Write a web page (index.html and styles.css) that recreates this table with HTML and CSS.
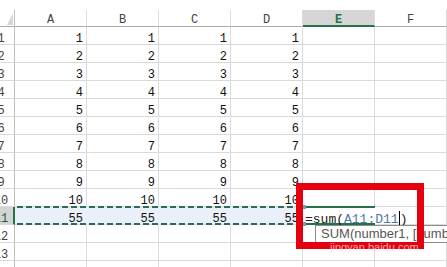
FILE: index.html
```html
<!DOCTYPE html>
<html>
<head>
<meta charset="utf-8">
<link rel="stylesheet" href="styles.css">
</head>
<body>
<div class="sheet">
  <div class="corner"><svg width="15" height="17" viewBox="0 0 15 17"><polygon points="7,15 13,15 13,3" fill="#d6d6d6"/></svg></div>
  <div class="ch">A</div><div class="ch">B</div><div class="ch">C</div><div class="ch">D</div><div class="ch active">E</div><div class="ch">F</div>

  <div class="rh"><span class="rn">1</span></div><div class="cell">1</div><div class="cell">1</div><div class="cell">1</div><div class="cell">1</div><div class="cell"></div><div class="cell"></div>
  <div class="rh"><span class="rn">2</span></div><div class="cell">2</div><div class="cell">2</div><div class="cell">2</div><div class="cell">2</div><div class="cell"></div><div class="cell"></div>
  <div class="rh"><span class="rn">3</span></div><div class="cell">3</div><div class="cell">3</div><div class="cell">3</div><div class="cell">3</div><div class="cell"></div><div class="cell"></div>
  <div class="rh"><span class="rn">4</span></div><div class="cell">4</div><div class="cell">4</div><div class="cell">4</div><div class="cell">4</div><div class="cell"></div><div class="cell"></div>
  <div class="rh"><span class="rn">5</span></div><div class="cell">5</div><div class="cell">5</div><div class="cell">5</div><div class="cell">5</div><div class="cell"></div><div class="cell"></div>
  <div class="rh"><span class="rn">6</span></div><div class="cell">6</div><div class="cell">6</div><div class="cell">6</div><div class="cell">6</div><div class="cell"></div><div class="cell"></div>
  <div class="rh"><span class="rn">7</span></div><div class="cell">7</div><div class="cell">7</div><div class="cell">7</div><div class="cell">7</div><div class="cell"></div><div class="cell"></div>
  <div class="rh"><span class="rn">8</span></div><div class="cell">8</div><div class="cell">8</div><div class="cell">8</div><div class="cell">8</div><div class="cell"></div><div class="cell"></div>
  <div class="rh"><span class="rn">9</span></div><div class="cell">9</div><div class="cell">9</div><div class="cell">9</div><div class="cell">9</div><div class="cell"></div><div class="cell"></div>
  <div class="rh"><span class="rn">10</span></div><div class="cell">10</div><div class="cell">10</div><div class="cell">10</div><div class="cell">10</div><div class="cell"></div><div class="cell"></div>
  <div class="rh active"><span class="rn">11</span></div><div class="cell sel">55</div><div class="cell sel">55</div><div class="cell sel">55</div><div class="cell sel">55</div><div class="cell editing">=sum(<span class="ref">A11:D11</span><span class="caret"></span>)</div><div class="cell after-edit"></div>
  <div class="rh"><span class="rn">12</span></div><div class="cell"></div><div class="cell"></div><div class="cell"></div><div class="cell"></div><div class="cell"></div><div class="cell"></div>
  <div class="rh"><span class="rn">13</span></div><div class="cell"></div><div class="cell"></div><div class="cell"></div><div class="cell"></div><div class="cell"></div><div class="cell"></div>
  <div class="rh"><span class="rn">14</span></div><div class="cell"></div><div class="cell"></div><div class="cell"></div><div class="cell"></div><div class="cell"></div><div class="cell"></div>
</div>

<div class="marquee"></div>
<div class="handle h-top"></div>
<div class="handle h-bottom"></div>
<div class="tooltip">SUM(number1, [number2], ...)</div>
<div class="redbox"></div>
<div class="watermark">jingyan.baidu.com</div>
</body>
</html>
```
FILE: styles.css
```css
html, body {
  margin: 0;
  padding: 0;
  background: #ffffff;
}
body {
  width: 447px;
  height: 267px;
  overflow: hidden;
  position: relative;
}
.sheet {
  margin-top: 10px;
  display: grid;
  grid-template-columns: 15px repeat(6, 72px);
  grid-template-rows: 17px;
  grid-auto-rows: 18px;
  font-family: "Liberation Mono", "Courier New", monospace;
  font-size: 12px;
}
.corner {
  box-sizing: border-box;
  border-right: 1px solid #bdbdbd;
  border-bottom: 1px solid #ababab;
}
.corner svg { display: block; }
.ch {
  box-sizing: border-box;
  border-right: 1px solid #dcdcdc;
  border-bottom: 1px solid #ababab;
  text-align: center;
  padding-top: 5px;
  line-height: 11px;
  color: #444444;
}
.ch.active {
  background: #d6d6d6;
  border-bottom: 2px solid #217346;
  color: #217346;
  font-weight: bold;
}
.rh {
  box-sizing: border-box;
  border-right: 1px solid #bdbdbd;
  border-bottom: 1px solid #dadada;
  padding-top: 7px;
  line-height: 11px;
  color: #444444;
}
.rh.active {
  background: #d4d4d4;
  border-right: 2px solid #217346;
  color: #1f5e3c;
}
.rn {
  display: block;
  width: 28px;
  margin-left: -13px;
  text-align: center;
}
.cell {
  box-sizing: border-box;
  border-right: 1px solid #dadada;
  border-bottom: 1px solid #dadada;
  padding: 7px 3px 0 0;
  line-height: 11px;
  text-align: right;
  color: #111111;
  white-space: nowrap;
}
.cell.sel {
  background: #e9f0fa;
  border-right-color: #e9f0fa;
}
.cell.editing {
  position: relative;
  z-index: 1;
  background: #ffffff;
  border-top: 2px solid #217346;
  border-bottom: 2px solid #217346;
  border-right: none;
  text-align: left;
  padding: 3px 0 0 2px;
  font-size: 13px;
  line-height: 13px;
  color: #222222;
  overflow: visible;
  margin-top: -1px;
  height: 19px;
}
.cell.after-edit {
  background: #ffffff;
}
.ref { color: #5377ad; }
.caret {
  display: inline-block;
  width: 0;
  height: 15px;
  border-left: 1px solid #000000;
  vertical-align: -3px;
}
.marquee {
  position: absolute;
  left: 17px;
  top: 206px;
  width: 286px;
  height: 19px;
  background:
    repeating-linear-gradient(90deg, #2e6a5c 0 6px, transparent 6px 9px) top left / 100% 2px no-repeat,
    repeating-linear-gradient(90deg, #2e6a5c 0 6px, transparent 6px 9px) bottom left / 100% 2px no-repeat;
}
.handle {
  position: absolute;
  left: 302px;
  width: 4px;
  height: 4px;
  background: #7f97b6;
  z-index: 2;
}
.h-top { top: 205px; }
.h-bottom { top: 222px; }
.tooltip {
  position: absolute;
  left: 315px;
  top: 225px;
  height: 18px;
  box-sizing: border-box;
  border: 1px solid #8c8c8c;
  background: #ffffff;
  padding: 0 5px;
  font-family: "Liberation Sans", Arial, sans-serif;
  font-size: 13px;
  line-height: 16px;
  color: #575757;
  white-space: nowrap;
  z-index: 3;
}
.redbox {
  position: absolute;
  left: 296px;
  top: 183px;
  width: 128px;
  height: 66px;
  box-sizing: border-box;
  border: 7px solid #e5000f;
  z-index: 5;
}
.watermark {
  position: absolute;
  left: 330px;
  top: 241px;
  font-family: "Liberation Sans", Arial, sans-serif;
  font-size: 11px;
  line-height: 12px;
  color: rgba(255, 225, 225, 0.75);
  z-index: 6;
}
```
